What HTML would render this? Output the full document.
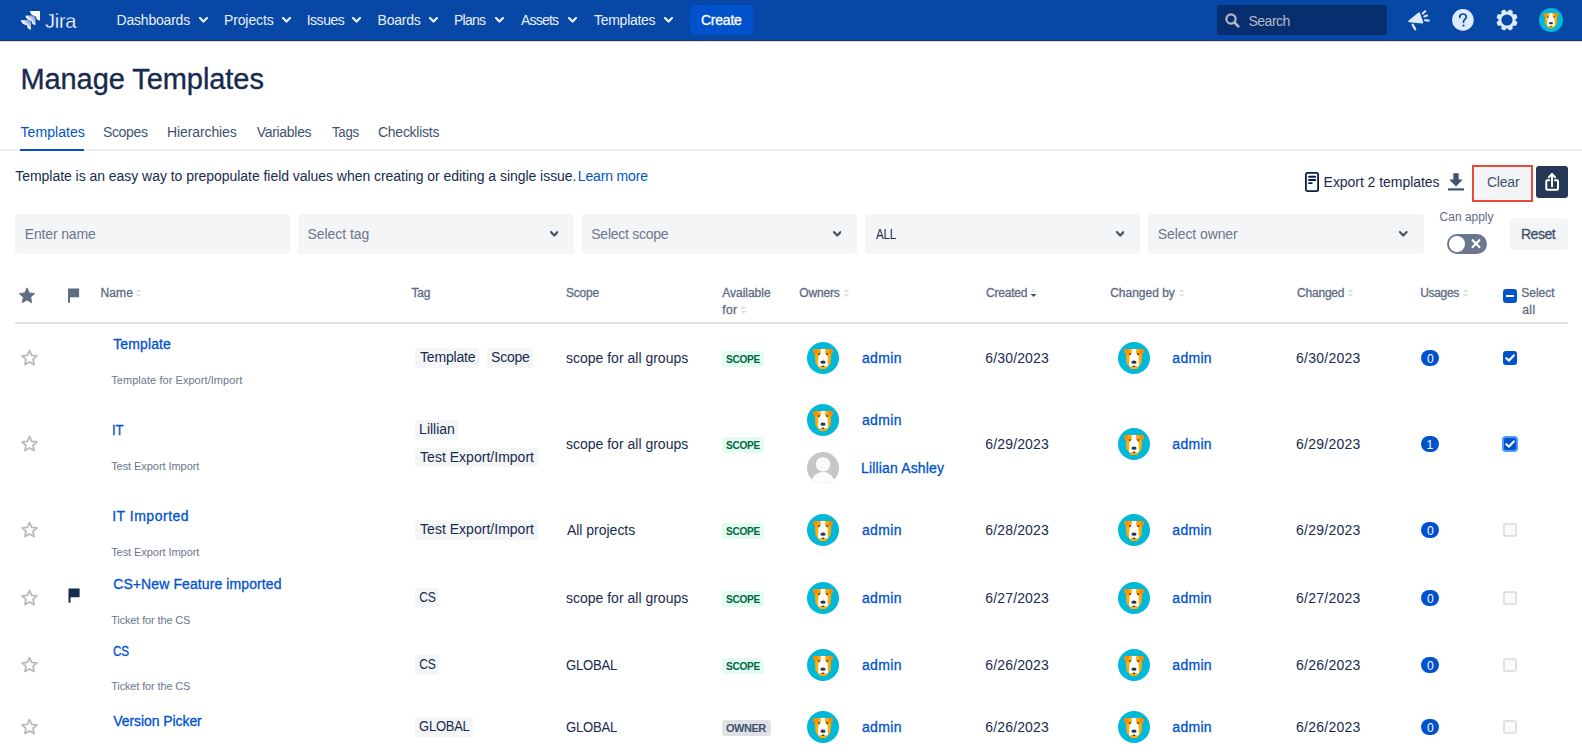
<!DOCTYPE html>
<html><head><meta charset="utf-8"><title>Manage Templates</title>
<style>
html,body{margin:0;padding:0;background:#fff;}
body{width:1582px;height:752px;position:relative;overflow:hidden;font-family:"Liberation Sans",sans-serif;}
.t{position:absolute;line-height:1;white-space:pre;}
</style></head><body>
<div style="position:absolute;left:0px;top:0px;width:1582px;height:40px;background:#0747A6;border-radius:0px;"></div><div style="position:absolute;left:0px;top:40px;width:1582px;height:1px;background:#1d3461;border-radius:0px;"></div><div style="position:absolute;left:0px;top:41px;width:1582px;height:1px;background:#dfe2e7;border-radius:0px;"></div><div style="position:absolute;left:690px;top:5px;width:63px;height:30px;background:#0052CC;border-radius:3px;"></div><div style="position:absolute;left:1217px;top:5px;width:170px;height:30px;background:#072f6f;border-radius:3px;"></div><svg style="position:absolute;left:198.6px;top:17px" width="9" height="6" viewBox="0 0 9 6"><path d="M1 1 L4.5 4.6 L8 1" fill="none" stroke="#E9F0FB" stroke-width="2.2" stroke-linecap="round" stroke-linejoin="round"/></svg><svg style="position:absolute;left:281.5px;top:17px" width="9" height="6" viewBox="0 0 9 6"><path d="M1 1 L4.5 4.6 L8 1" fill="none" stroke="#E9F0FB" stroke-width="2.2" stroke-linecap="round" stroke-linejoin="round"/></svg><svg style="position:absolute;left:352.3px;top:17px" width="9" height="6" viewBox="0 0 9 6"><path d="M1 1 L4.5 4.6 L8 1" fill="none" stroke="#E9F0FB" stroke-width="2.2" stroke-linecap="round" stroke-linejoin="round"/></svg><svg style="position:absolute;left:429px;top:17px" width="9" height="6" viewBox="0 0 9 6"><path d="M1 1 L4.5 4.6 L8 1" fill="none" stroke="#E9F0FB" stroke-width="2.2" stroke-linecap="round" stroke-linejoin="round"/></svg><svg style="position:absolute;left:495px;top:17px" width="9" height="6" viewBox="0 0 9 6"><path d="M1 1 L4.5 4.6 L8 1" fill="none" stroke="#E9F0FB" stroke-width="2.2" stroke-linecap="round" stroke-linejoin="round"/></svg><svg style="position:absolute;left:568px;top:17px" width="9" height="6" viewBox="0 0 9 6"><path d="M1 1 L4.5 4.6 L8 1" fill="none" stroke="#E9F0FB" stroke-width="2.2" stroke-linecap="round" stroke-linejoin="round"/></svg><svg style="position:absolute;left:664.4px;top:17px" width="9" height="6" viewBox="0 0 9 6"><path d="M1 1 L4.5 4.6 L8 1" fill="none" stroke="#E9F0FB" stroke-width="2.2" stroke-linecap="round" stroke-linejoin="round"/></svg><svg style="position:absolute;left:20px;top:10px" width="21" height="21" viewBox="0 0 21 21">
<defs><linearGradient id="jg1" x1="0.95" y1="0.05" x2="0.45" y2="0.55"><stop offset="0" stop-color="#fff" stop-opacity=".3"/><stop offset="1" stop-color="#fff"/></linearGradient></defs>
<path d="M10 1 H20 V10.6 C17.8 10.6 16 8.8 15.9 6.2 C13.2 6 10.2 4.2 10 1 Z" fill="#fff"/>
<path d="M5.5 5.5 H15.5 V15.1 C13.3 15.1 11.5 13.3 11.4 10.7 C8.7 10.5 5.7 8.7 5.5 5.5 Z" fill="url(#jg1)"/>
<path d="M1 10 H11 V19.6 C8.8 19.6 7 17.8 6.9 15.2 C4.2 15 1.2 13.2 1 10 Z" fill="url(#jg1)"/>
</svg><svg style="position:absolute;left:1225px;top:13px" width="15" height="15" viewBox="0 0 15 15"><circle cx="6" cy="6" r="4.6" fill="none" stroke="#B3BAC5" stroke-width="2.2"/><path d="M9.4 9.4 L13.3 13.3" stroke="#B3BAC5" stroke-width="2.6" stroke-linecap="round"/></svg><svg style="position:absolute;left:1406px;top:8px" width="26" height="24" viewBox="0 0 26 24"><path d="M3.2 13.3 L13.1 5.2 L16.4 14.5 Z" fill="#DEEBFF" stroke="#DEEBFF" stroke-width="1.8" stroke-linejoin="round"/><path d="M6.6 16.6 L9.3 21.4" stroke="#DEEBFF" stroke-width="2.2" stroke-linecap="round"/><path d="M16.8 5.5 L19.2 3.2 M18.4 8.4 L21 7.6 M19 12.2 L22.6 12.6" stroke="#DEEBFF" stroke-width="2.1" stroke-linecap="round"/></svg><svg style="position:absolute;left:1452px;top:9px" width="22" height="22" viewBox="0 0 22 22"><circle cx="10.9" cy="10.9" r="10.8" fill="#DEEBFF"/><path d="M7.7 8.3 C7.7 6.3 9.2 5 11 5 C12.9 5 14.3 6.3 14.3 8 C14.3 10.3 11.6 10.6 11.5 12.8 L11.5 13.3" fill="none" stroke="#0747A6" stroke-width="1.7" stroke-linecap="round"/><circle cx="11.5" cy="16.6" r="1.1" fill="#0747A6"/></svg><svg style="position:absolute;left:1496px;top:9px" width="22" height="22" viewBox="0 0 22 22"><circle cx="11" cy="11" r="8.6" fill="#DEEBFF"/><rect x="8.6" y="0.3" width="4.8" height="5" rx="1.6" transform="rotate(22.5 11 11)" fill="#DEEBFF"/><rect x="8.6" y="0.3" width="4.8" height="5" rx="1.6" transform="rotate(67.5 11 11)" fill="#DEEBFF"/><rect x="8.6" y="0.3" width="4.8" height="5" rx="1.6" transform="rotate(112.5 11 11)" fill="#DEEBFF"/><rect x="8.6" y="0.3" width="4.8" height="5" rx="1.6" transform="rotate(157.5 11 11)" fill="#DEEBFF"/><rect x="8.6" y="0.3" width="4.8" height="5" rx="1.6" transform="rotate(202.5 11 11)" fill="#DEEBFF"/><rect x="8.6" y="0.3" width="4.8" height="5" rx="1.6" transform="rotate(247.5 11 11)" fill="#DEEBFF"/><rect x="8.6" y="0.3" width="4.8" height="5" rx="1.6" transform="rotate(292.5 11 11)" fill="#DEEBFF"/><rect x="8.6" y="0.3" width="4.8" height="5" rx="1.6" transform="rotate(337.5 11 11)" fill="#DEEBFF"/><circle cx="11" cy="11" r="5.6" fill="#0747A6"/></svg><svg width="0" height="0" style="position:absolute"><defs><g id="dog">
<circle cx="16" cy="16" r="16" fill="#00B8D9"/>
<path d="M8.6 7.6 Q16 5.9 23.4 7.6 L24.1 14 L23.5 21.6 L20.2 25 L19.3 27.1 L12.7 27.1 L11.8 25 L8.5 21.6 L7.9 14 Z" fill="#FFAB00"/>
<ellipse cx="8.4" cy="9.5" rx="2.3" ry="2.8" transform="rotate(-25 8.4 9.5)" fill="#FF8B00"/>
<ellipse cx="23.6" cy="9.5" rx="2.3" ry="2.8" transform="rotate(25 23.6 9.5)" fill="#FF8B00"/>
<path d="M13.8 6.9 L18.2 6.9 L18.1 11.2 L20.7 14.6 L20.9 24.4 L11.1 24.4 L11.3 14.6 L13.9 11.2 Z" fill="#fff"/>
<circle cx="11.9" cy="12" r="1.1" fill="#42526E"/><circle cx="20.1" cy="12" r="1.1" fill="#42526E"/>
<ellipse cx="16" cy="20.2" rx="2.6" ry="1.6" fill="#253858"/>
<path d="M13.2 24.3 L18.8 24.3 L18.1 26.8 L13.9 26.8 Z" fill="#FFAB00"/>
<ellipse cx="16" cy="24.3" rx="1.3" ry=".7" fill="#253858"/>
</g>
<g id="star"><path d="M8.50 1.50 L10.67 6.31 L15.92 6.89 L12.02 10.44 L13.08 15.61 L8.50 13.00 L3.92 15.61 L4.98 10.44 L1.08 6.89 L6.33 6.31 Z" fill="none" stroke="#B9B9B9" stroke-width="1.75" stroke-linejoin="round"/></g>
</defs></svg><svg style="position:absolute;left:1539.0px;top:8.0px" width="24" height="24" viewBox="0 0 32 32"><use href="#dog"/></svg><div style="position:absolute;left:0px;top:149px;width:1582px;height:2px;background:#EBECF0;border-radius:0px;"></div><div style="position:absolute;left:20px;top:149px;width:64px;height:2px;background:#0052CC;border-radius:0px;"></div><svg style="position:absolute;left:1304px;top:171px" width="16" height="22" viewBox="0 0 16 22"><rect x="1.9" y="1.9" width="12.2" height="18.2" rx="1.6" fill="none" stroke="#0B1F45" stroke-width="1.8"/><path d="M5 5.8 H11.2 M5 9 H11.2 M5 12.1 H7.8" stroke="#0B1F45" stroke-width="1.9" stroke-linecap="round"/></svg><svg style="position:absolute;left:1447px;top:172px" width="18" height="20" viewBox="0 0 18 20"><path d="M6.3 1.3 H11.7 V7.4 H15.8 L9 14.6 L2.2 7.4 H6.3 Z" fill="#42526E"/><rect x="1" y="16.3" width="16" height="2.2" fill="#42526E"/></svg><div style="position:absolute;left:1473.5px;top:166.5px;width:58.0px;height:34.0px;background:#F4F5F7;border-radius:0px;border:2.8px solid #E8493B;box-sizing:border-box;width:60.8px;height:36.6px;left:1472.1px;top:165.1px;"></div><div style="position:absolute;left:1536px;top:166px;width:32px;height:32px;background:#253858;border-radius:3px;"></div><svg style="position:absolute;left:1543px;top:172px" width="18" height="20" viewBox="0 0 18 20"><path d="M9 2.2 V14.2" stroke="#fff" stroke-width="2" stroke-linecap="round"/><path d="M5.9 5.2 L9 2 L12.1 5.2" fill="none" stroke="#fff" stroke-width="2" stroke-linecap="round" stroke-linejoin="round"/><path d="M6.2 8.3 H4.3 Q3.3 8.3 3.3 9.3 V16.8 Q3.3 17.8 4.3 17.8 H14 Q15 17.8 15 16.8 V9.3 Q15 8.3 14 8.3 H11.9" fill="none" stroke="#fff" stroke-width="2" stroke-linecap="round" stroke-linejoin="round"/></svg><div style="position:absolute;left:15px;top:214px;width:275px;height:40px;background:#F4F5F7;border-radius:3px;"></div><div style="position:absolute;left:298px;top:214px;width:276px;height:40px;background:#F4F5F7;border-radius:3px;"></div><div style="position:absolute;left:582px;top:214px;width:275px;height:40px;background:#F4F5F7;border-radius:3px;"></div><div style="position:absolute;left:865px;top:214px;width:275px;height:40px;background:#F4F5F7;border-radius:3px;"></div><div style="position:absolute;left:1148px;top:214px;width:276px;height:40px;background:#F4F5F7;border-radius:3px;"></div><svg style="position:absolute;left:549.6px;top:231.3px" width="8.5" height="6" viewBox="0 0 9 6"><path d="M1 1 L4.5 4.6 L8 1" fill="none" stroke="#42526E" stroke-width="2.3" stroke-linecap="round" stroke-linejoin="round"/></svg><svg style="position:absolute;left:832.6px;top:231.3px" width="8.5" height="6" viewBox="0 0 9 6"><path d="M1 1 L4.5 4.6 L8 1" fill="none" stroke="#42526E" stroke-width="2.3" stroke-linecap="round" stroke-linejoin="round"/></svg><svg style="position:absolute;left:1115.6px;top:231.3px" width="8.5" height="6" viewBox="0 0 9 6"><path d="M1 1 L4.5 4.6 L8 1" fill="none" stroke="#42526E" stroke-width="2.3" stroke-linecap="round" stroke-linejoin="round"/></svg><svg style="position:absolute;left:1399.1px;top:231.3px" width="8.5" height="6" viewBox="0 0 9 6"><path d="M1 1 L4.5 4.6 L8 1" fill="none" stroke="#42526E" stroke-width="2.3" stroke-linecap="round" stroke-linejoin="round"/></svg><svg style="position:absolute;left:1447px;top:234px" width="40" height="20" viewBox="0 0 40 20"><rect x="0" y="0" width="40" height="20" rx="10" fill="#6B778C"/><circle cx="10" cy="10" r="8" fill="#fff"/><path d="M25.6 6.2 L32.4 13 M32.4 6.2 L25.6 13" stroke="#fff" stroke-width="2.2" stroke-linecap="round"/></svg><div style="position:absolute;left:1510px;top:218px;width:58px;height:32px;background:#F4F5F7;border-radius:3px;"></div><svg style="position:absolute;left:18px;top:287px" width="18" height="18" viewBox="0 0 18 18"><path d="M9 0.8 L11.3 5.9 L16.8 6.5 L12.7 10.2 L13.8 15.8 L9 13 L4.2 15.8 L5.3 10.2 L1.2 6.5 L6.7 5.9 Z" fill="#5E6C84" stroke="#5E6C84" stroke-width=".8" stroke-linejoin="round"/></svg><svg style="position:absolute;left:67px;top:288px" width="13" height="16" viewBox="0 0 13 16"><path d="M1 .6 H12.1 V9.2 H3 V14.8 H1 Z" fill="#5E6C84"/></svg><svg style="position:absolute;left:134.5px;top:288px" width="7" height="10" viewBox="0 0 7 10"><path d="M.5 3.8 L3.5 .8 L6.5 3.8 Z" fill="#DFE1E6"/><path d="M.5 6 L3.5 9 L6.5 6 Z" fill="#DFE1E6"/></svg><svg style="position:absolute;left:842.5px;top:288px" width="7" height="10" viewBox="0 0 7 10"><path d="M.5 3.8 L3.5 .8 L6.5 3.8 Z" fill="#DFE1E6"/><path d="M.5 6 L3.5 9 L6.5 6 Z" fill="#DFE1E6"/></svg><svg style="position:absolute;left:1177.5px;top:288px" width="7" height="10" viewBox="0 0 7 10"><path d="M.5 3.8 L3.5 .8 L6.5 3.8 Z" fill="#DFE1E6"/><path d="M.5 6 L3.5 9 L6.5 6 Z" fill="#DFE1E6"/></svg><svg style="position:absolute;left:1346.5px;top:288px" width="7" height="10" viewBox="0 0 7 10"><path d="M.5 3.8 L3.5 .8 L6.5 3.8 Z" fill="#DFE1E6"/><path d="M.5 6 L3.5 9 L6.5 6 Z" fill="#DFE1E6"/></svg><svg style="position:absolute;left:1461.5px;top:288px" width="7" height="10" viewBox="0 0 7 10"><path d="M.5 3.8 L3.5 .8 L6.5 3.8 Z" fill="#DFE1E6"/><path d="M.5 6 L3.5 9 L6.5 6 Z" fill="#DFE1E6"/></svg><svg style="position:absolute;left:1029.6px;top:288px" width="7" height="10" viewBox="0 0 7 10"><path d="M.5 3.8 L3.5 .8 L6.5 3.8 Z" fill="#DFE1E6"/><path d="M.5 6 L3.5 9 L6.5 6 Z" fill="#42526E"/></svg><svg style="position:absolute;left:739.5px;top:305px" width="7" height="10" viewBox="0 0 7 10"><path d="M.5 3.8 L3.5 .8 L6.5 3.8 Z" fill="#DFE1E6"/><path d="M.5 6 L3.5 9 L6.5 6 Z" fill="#DFE1E6"/></svg><div style="position:absolute;left:1503px;top:289px;width:14px;height:14px;background:#0052CC;border-radius:3px;"></div><div style="position:absolute;left:1506px;top:295px;width:8px;height:2.1999999999999886px;background:#fff;border-radius:0px;"></div><div style="position:absolute;left:15px;top:322px;width:1553px;height:2px;background:#DFE1E6;border-radius:0px;"></div><svg style="position:absolute;left:21.4px;top:349.2px" width="17" height="17" viewBox="0 0 17 17"><use href="#star"/></svg><div style="position:absolute;left:415.1px;top:348.3px;width:63.5px;height:19.399999999999977px;background:#F4F5F7;border-radius:3px;"></div><div style="position:absolute;left:487.2px;top:348.3px;width:45.599999999999966px;height:19.399999999999977px;background:#F4F5F7;border-radius:3px;"></div><div style="position:absolute;left:722.1px;top:351px;width:42.0px;height:16px;background:#E3FCEF;border-radius:3px;"></div><svg style="position:absolute;left:807.0px;top:342.0px" width="32" height="32" viewBox="0 0 32 32"><use href="#dog"/></svg><svg style="position:absolute;left:1118.0px;top:342.0px" width="32" height="32" viewBox="0 0 32 32"><use href="#dog"/></svg><div style="position:absolute;left:1421px;top:350px;width:18px;height:16px;background:#0052CC;border-radius:8px;"></div><div style="position:absolute;left:1503.2px;top:351px;width:13.799999999999955px;height:13.899999999999977px;background:#0052CC;border-radius:3px;"></div><svg style="position:absolute;left:1503.2px;top:351px" width="14" height="14" viewBox="0 0 14 14"><path d="M3.3 7.2 L6 9.6 L10.8 4.4" fill="none" stroke="#fff" stroke-width="2.2" stroke-linecap="round" stroke-linejoin="round"/></svg><svg style="position:absolute;left:21.4px;top:435.2px" width="17" height="17" viewBox="0 0 17 17"><use href="#star"/></svg><div style="position:absolute;left:415.2px;top:420.3px;width:42.60000000000002px;height:19.399999999999977px;background:#F4F5F7;border-radius:3px;"></div><div style="position:absolute;left:415.2px;top:448.0px;width:122.69999999999999px;height:19.399999999999977px;background:#F4F5F7;border-radius:3px;"></div><div style="position:absolute;left:722.1px;top:437px;width:42.0px;height:16px;background:#E3FCEF;border-radius:3px;"></div><svg style="position:absolute;left:807.0px;top:404.0px" width="32" height="32" viewBox="0 0 32 32"><use href="#dog"/></svg><svg style="position:absolute;left:1118.0px;top:428.0px" width="32" height="32" viewBox="0 0 32 32"><use href="#dog"/></svg><div style="position:absolute;left:1421px;top:436px;width:18px;height:16px;background:#0052CC;border-radius:8px;"></div><div style="position:absolute;left:1502.2px;top:436px;width:15.799999999999955px;height:15.800000000000011px;background:#4C9AFF;border-radius:4px;"></div><div style="position:absolute;left:1504px;top:437.8px;width:12.200000000000045px;height:12.199999999999989px;background:#0052CC;border-radius:2px;"></div><svg style="position:absolute;left:1503.2px;top:437px" width="14" height="14" viewBox="0 0 14 14"><path d="M3.3 7.2 L6 9.6 L10.8 4.4" fill="none" stroke="#fff" stroke-width="2.2" stroke-linecap="round" stroke-linejoin="round"/></svg><svg style="position:absolute;left:21.4px;top:521.2px" width="17" height="17" viewBox="0 0 17 17"><use href="#star"/></svg><div style="position:absolute;left:415.2px;top:520.3px;width:122.69999999999999px;height:19.40000000000009px;background:#F4F5F7;border-radius:3px;"></div><div style="position:absolute;left:722.1px;top:523px;width:42.0px;height:16px;background:#E3FCEF;border-radius:3px;"></div><svg style="position:absolute;left:807.0px;top:514.0px" width="32" height="32" viewBox="0 0 32 32"><use href="#dog"/></svg><svg style="position:absolute;left:1118.0px;top:514.0px" width="32" height="32" viewBox="0 0 32 32"><use href="#dog"/></svg><div style="position:absolute;left:1421px;top:522px;width:18px;height:16px;background:#0052CC;border-radius:8px;"></div><div style="position:absolute;left:1503.2px;top:523px;width:13.799999999999955px;height:13.899999999999977px;background:#FAFBFC;border-radius:3px;border:2px solid #DFE1E6;box-sizing:border-box;"></div><svg style="position:absolute;left:21.4px;top:589.2px" width="17" height="17" viewBox="0 0 17 17"><use href="#star"/></svg><svg style="position:absolute;left:66.5px;top:588px" width="14" height="16" viewBox="0 0 13 16"><path d="M1 .6 H12.1 V9.2 H3 V14.8 H1 Z" fill="#172B4D"/></svg><div style="position:absolute;left:415.1px;top:588.3px;width:23.69999999999999px;height:19.40000000000009px;background:#F4F5F7;border-radius:3px;"></div><div style="position:absolute;left:722.1px;top:591px;width:42.0px;height:16px;background:#E3FCEF;border-radius:3px;"></div><svg style="position:absolute;left:807.0px;top:582.0px" width="32" height="32" viewBox="0 0 32 32"><use href="#dog"/></svg><svg style="position:absolute;left:1118.0px;top:582.0px" width="32" height="32" viewBox="0 0 32 32"><use href="#dog"/></svg><div style="position:absolute;left:1421px;top:590px;width:18px;height:16px;background:#0052CC;border-radius:8px;"></div><div style="position:absolute;left:1503.2px;top:591px;width:13.799999999999955px;height:13.899999999999977px;background:#FAFBFC;border-radius:3px;border:2px solid #DFE1E6;box-sizing:border-box;"></div><svg style="position:absolute;left:21.4px;top:656.2px" width="17" height="17" viewBox="0 0 17 17"><use href="#star"/></svg><div style="position:absolute;left:415.1px;top:655.3px;width:23.69999999999999px;height:19.40000000000009px;background:#F4F5F7;border-radius:3px;"></div><div style="position:absolute;left:722.1px;top:658px;width:42.0px;height:16px;background:#E3FCEF;border-radius:3px;"></div><svg style="position:absolute;left:807.0px;top:649.0px" width="32" height="32" viewBox="0 0 32 32"><use href="#dog"/></svg><svg style="position:absolute;left:1118.0px;top:649.0px" width="32" height="32" viewBox="0 0 32 32"><use href="#dog"/></svg><div style="position:absolute;left:1421px;top:657px;width:18px;height:16px;background:#0052CC;border-radius:8px;"></div><div style="position:absolute;left:1503.2px;top:658px;width:13.799999999999955px;height:13.899999999999977px;background:#FAFBFC;border-radius:3px;border:2px solid #DFE1E6;box-sizing:border-box;"></div><svg style="position:absolute;left:21.4px;top:718.2px" width="17" height="17" viewBox="0 0 17 17"><use href="#star"/></svg><div style="position:absolute;left:415.1px;top:717.3px;width:57.799999999999955px;height:19.40000000000009px;background:#F4F5F7;border-radius:3px;"></div><div style="position:absolute;left:722.1px;top:720px;width:48.60000000000002px;height:16px;background:#DFE1E6;border-radius:3px;"></div><svg style="position:absolute;left:807.0px;top:711.0px" width="32" height="32" viewBox="0 0 32 32"><use href="#dog"/></svg><svg style="position:absolute;left:1118.0px;top:711.0px" width="32" height="32" viewBox="0 0 32 32"><use href="#dog"/></svg><div style="position:absolute;left:1421px;top:719px;width:18px;height:16px;background:#0052CC;border-radius:8px;"></div><div style="position:absolute;left:1503.2px;top:720px;width:13.799999999999955px;height:13.899999999999977px;background:#FAFBFC;border-radius:3px;border:2px solid #DFE1E6;box-sizing:border-box;"></div><svg style="position:absolute;left:807px;top:452px" width="32" height="32" viewBox="0 0 32 32"><defs><clipPath id="cc"><circle cx="16" cy="16" r="16"/></clipPath></defs><circle cx="16" cy="16" r="16" fill="#C6C6C6"/><g clip-path="url(#cc)"><circle cx="16" cy="12.4" r="7.2" fill="#FAFAFA"/><circle cx="16" cy="31.5" r="11.6" fill="#FCFCFC"/></g></svg>
<div class="t" style="left:116.60px;top:13.20px;font-size:14px;color:#E9F0FB;letter-spacing:-0.21px;">Dashboards</div><div class="t" style="left:223.90px;top:13.20px;font-size:14px;color:#E9F0FB;letter-spacing:-0.101px;">Projects</div><div class="t" style="left:306.70px;top:13.20px;font-size:14px;color:#E9F0FB;letter-spacing:-0.48px;">Issues</div><div class="t" style="left:377.50px;top:13.20px;font-size:14px;color:#E9F0FB;letter-spacing:-0.2px;">Boards</div><div class="t" style="left:454.00px;top:13.20px;font-size:14px;color:#E9F0FB;letter-spacing:-0.75px;">Plans</div><div class="t" style="left:521.00px;top:13.20px;font-size:14px;color:#E9F0FB;letter-spacing:-0.8px;">Assets</div><div class="t" style="left:594.00px;top:13.20px;font-size:14px;color:#E9F0FB;letter-spacing:-0.275px;">Templates</div><div class="t" style="left:701.00px;top:13.20px;font-size:14px;color:#FFFFFF;-webkit-text-stroke:0.3px #FFFFFF;letter-spacing:-0.24px;">Create</div><div class="t" style="left:1248.50px;top:14.00px;font-size:14px;color:#B3BAC5;letter-spacing:-0.5px;">Search</div><div class="t" style="left:44.80px;top:9.90px;font-size:21px;color:#FFFFFF;letter-spacing:-0.3px;transform:scaleX(0.954);transform-origin:0px 0;-webkit-text-stroke:0.3px #0747A6;">Jira</div><div class="t" style="left:20.40px;top:65.00px;font-size:29px;color:#172B4D;letter-spacing:-0.067px;-webkit-text-stroke:0.35px #172B4D;">Manage Templates</div><div class="t" style="left:20.50px;top:125.00px;font-size:14px;color:#0052CC;letter-spacing:0.062px;">Templates</div><div class="t" style="left:103.00px;top:125.00px;font-size:14px;color:#42526E;letter-spacing:-0.36px;">Scopes</div><div class="t" style="left:167.00px;top:125.00px;font-size:14px;color:#42526E;letter-spacing:-0.1px;">Hierarchies</div><div class="t" style="left:256.70px;top:125.00px;font-size:14px;color:#42526E;letter-spacing:-0.3px;">Variables</div><div class="t" style="left:331.80px;top:125.00px;font-size:14px;color:#42526E;letter-spacing:-0.3px;transform:scaleX(0.946);transform-origin:0px 0;">Tags</div><div class="t" style="left:378.00px;top:125.00px;font-size:14px;color:#42526E;letter-spacing:-0.267px;">Checklists</div><div class="t" style="left:15.30px;top:169.00px;font-size:14px;color:#172B4D;letter-spacing:-0.042px;">Template is an easy way to prepopulate field values when creating or editing a single issue.</div><div class="t" style="left:577.80px;top:169.00px;font-size:14px;color:#0052CC;letter-spacing:-0.156px;">Learn more</div><div class="t" style="left:1323.60px;top:175.00px;font-size:14px;color:#172B4D;letter-spacing:-0.046px;">Export 2 templates</div><div class="t" style="left:1486.90px;top:175.00px;font-size:14px;color:#42526E;letter-spacing:-0.175px;">Clear</div><div class="t" style="left:24.80px;top:227.20px;font-size:14px;color:#6B778C;letter-spacing:-0.156px;">Enter name</div><div class="t" style="left:307.40px;top:227.20px;font-size:14px;color:#6B778C;letter-spacing:-0.045px;">Select tag</div><div class="t" style="left:591.30px;top:227.20px;font-size:14px;color:#6B778C;letter-spacing:-0.263px;">Select scope</div><div class="t" style="left:875.70px;top:227.20px;font-size:14px;color:#172B4D;letter-spacing:-0.3px;transform:scaleX(0.829);transform-origin:0px 0;">ALL</div><div class="t" style="left:1157.70px;top:227.20px;font-size:14px;color:#6B778C;letter-spacing:-0.081px;">Select owner</div><div class="t" style="left:1439.60px;top:211.00px;font-size:12px;color:#5E6C84;letter-spacing:-0.014px;">Can apply</div><div class="t" style="left:1521.00px;top:227.40px;font-size:14px;color:#42526E;-webkit-text-stroke:0.3px #42526E;letter-spacing:-0.5px;">Reset</div><div class="t" style="left:100.60px;top:287.00px;font-size:12px;color:#5E6C84;-webkit-text-stroke:0.3px #5E6C84;letter-spacing:0.066px;">Name</div><div class="t" style="left:411.40px;top:287.00px;font-size:12px;color:#5E6C84;-webkit-text-stroke:0.3px #5E6C84;letter-spacing:-0.2px;">Tag</div><div class="t" style="left:565.90px;top:287.00px;font-size:12px;color:#5E6C84;-webkit-text-stroke:0.3px #5E6C84;letter-spacing:-0.175px;">Scope</div><div class="t" style="left:722.30px;top:287.00px;font-size:12px;color:#5E6C84;-webkit-text-stroke:0.3px #5E6C84;letter-spacing:-0.025px;">Available</div><div class="t" style="left:799.30px;top:287.00px;font-size:12px;color:#5E6C84;-webkit-text-stroke:0.3px #5E6C84;letter-spacing:-0.18px;">Owners</div><div class="t" style="left:986.00px;top:287.00px;font-size:12px;color:#5E6C84;-webkit-text-stroke:0.3px #5E6C84;letter-spacing:-0.201px;">Created</div><div class="t" style="left:1110.20px;top:287.00px;font-size:12px;color:#5E6C84;-webkit-text-stroke:0.3px #5E6C84;letter-spacing:-0.012px;">Changed by</div><div class="t" style="left:1297.00px;top:287.00px;font-size:12px;color:#5E6C84;-webkit-text-stroke:0.3px #5E6C84;letter-spacing:-0.201px;">Changed</div><div class="t" style="left:1420.30px;top:287.00px;font-size:12px;color:#5E6C84;-webkit-text-stroke:0.3px #5E6C84;letter-spacing:-0.34px;">Usages</div><div class="t" style="left:1521.30px;top:287.00px;font-size:12px;color:#5E6C84;-webkit-text-stroke:0.3px #5E6C84;letter-spacing:-0.02px;">Select</div><div class="t" style="left:722.30px;top:303.60px;font-size:12px;color:#5E6C84;-webkit-text-stroke:0.3px #5E6C84;letter-spacing:0.3px;">for</div><div class="t" style="left:1522.30px;top:303.60px;font-size:12px;color:#5E6C84;-webkit-text-stroke:0.3px #5E6C84;letter-spacing:0.4px;">all</div><div class="t" style="left:113.20px;top:337.00px;font-size:14px;color:#0052CC;-webkit-text-stroke:0.3px #0052CC;letter-spacing:0.129px;">Template</div><div class="t" style="left:111.20px;top:374.80px;font-size:11px;color:#6B778C;letter-spacing:0.056px;">Template for Export/Import</div><div class="t" style="left:420.00px;top:350.00px;font-size:14px;color:#172B4D;letter-spacing:-0.185px;">Template</div><div class="t" style="left:491.10px;top:350.00px;font-size:14px;color:#172B4D;letter-spacing:-0.25px;">Scope</div><div class="t" style="left:565.90px;top:351.00px;font-size:14px;color:#172B4D;letter-spacing:0.01px;">scope for all groups</div><div class="t" style="left:725.90px;top:354.00px;font-size:11px;color:#006644;font-weight:700;letter-spacing:-0.3px;transform:scaleX(0.918);transform-origin:0px 0;">SCOPE</div><div class="t" style="left:862.00px;top:351.00px;font-size:14px;color:#0052CC;-webkit-text-stroke:0.3px #0052CC;letter-spacing:0.325px;">admin</div><div class="t" style="left:985.30px;top:351.00px;font-size:14px;color:#172B4D;letter-spacing:0.15px;">6/30/2023</div><div class="t" style="left:1172.30px;top:351.00px;font-size:14px;color:#0052CC;-webkit-text-stroke:0.3px #0052CC;letter-spacing:0.3px;">admin</div><div class="t" style="left:1296.00px;top:351.00px;font-size:14px;color:#172B4D;letter-spacing:0.25px;">6/30/2023</div><div class="t" style="left:1427.10px;top:352.80px;font-size:12px;color:#FFFFFF;">0</div><div class="t" style="left:112.20px;top:423.30px;font-size:14px;color:#0052CC;-webkit-text-stroke:0.3px #0052CC;letter-spacing:-0.3px;transform:scaleX(0.940);transform-origin:1px 0;">IT</div><div class="t" style="left:111.20px;top:461.00px;font-size:11px;color:#6B778C;letter-spacing:-0.064px;">Test Export Import</div><div class="t" style="left:419.10px;top:422.00px;font-size:14px;color:#172B4D;">Lillian</div><div class="t" style="left:420.10px;top:449.70px;font-size:14px;color:#172B4D;letter-spacing:0.018px;">Test Export/Import</div><div class="t" style="left:565.90px;top:437.00px;font-size:14px;color:#172B4D;letter-spacing:0.01px;">scope for all groups</div><div class="t" style="left:725.90px;top:440.00px;font-size:11px;color:#006644;font-weight:700;letter-spacing:-0.3px;transform:scaleX(0.918);transform-origin:0px 0;">SCOPE</div><div class="t" style="left:862.00px;top:413.00px;font-size:14px;color:#0052CC;-webkit-text-stroke:0.3px #0052CC;letter-spacing:0.325px;">admin</div><div class="t" style="left:861.00px;top:461.00px;font-size:14px;color:#0052CC;-webkit-text-stroke:0.3px #0052CC;letter-spacing:0.162px;">Lillian Ashley</div><div class="t" style="left:985.30px;top:437.00px;font-size:14px;color:#172B4D;letter-spacing:0.15px;">6/29/2023</div><div class="t" style="left:1172.30px;top:437.00px;font-size:14px;color:#0052CC;-webkit-text-stroke:0.3px #0052CC;letter-spacing:0.3px;">admin</div><div class="t" style="left:1296.00px;top:437.00px;font-size:14px;color:#172B4D;letter-spacing:0.25px;">6/29/2023</div><div class="t" style="left:1426.60px;top:438.80px;font-size:12px;color:#FFFFFF;">1</div><div class="t" style="left:112.20px;top:509.30px;font-size:14px;color:#0052CC;-webkit-text-stroke:0.3px #0052CC;letter-spacing:0.51px;">IT Imported</div><div class="t" style="left:111.20px;top:546.50px;font-size:11px;color:#6B778C;letter-spacing:-0.064px;">Test Export Import</div><div class="t" style="left:420.10px;top:522.00px;font-size:14px;color:#172B4D;letter-spacing:0.018px;">Test Export/Import</div><div class="t" style="left:566.90px;top:523.00px;font-size:14px;color:#172B4D;letter-spacing:-0.01px;">All projects</div><div class="t" style="left:725.90px;top:526.00px;font-size:11px;color:#006644;font-weight:700;letter-spacing:-0.3px;transform:scaleX(0.918);transform-origin:0px 0;">SCOPE</div><div class="t" style="left:862.00px;top:523.00px;font-size:14px;color:#0052CC;-webkit-text-stroke:0.3px #0052CC;letter-spacing:0.325px;">admin</div><div class="t" style="left:985.30px;top:523.00px;font-size:14px;color:#172B4D;letter-spacing:0.15px;">6/28/2023</div><div class="t" style="left:1172.30px;top:523.00px;font-size:14px;color:#0052CC;-webkit-text-stroke:0.3px #0052CC;letter-spacing:0.3px;">admin</div><div class="t" style="left:1296.00px;top:523.00px;font-size:14px;color:#172B4D;letter-spacing:0.25px;">6/29/2023</div><div class="t" style="left:1427.10px;top:524.80px;font-size:12px;color:#FFFFFF;">0</div><div class="t" style="left:113.20px;top:576.80px;font-size:14px;color:#0052CC;-webkit-text-stroke:0.3px #0052CC;letter-spacing:0.1px;">CS+New Feature imported</div><div class="t" style="left:111.20px;top:614.80px;font-size:11px;color:#6B778C;letter-spacing:-0.143px;">Ticket for the CS</div><div class="t" style="left:419.00px;top:590.00px;font-size:14px;color:#172B4D;letter-spacing:-0.3px;transform:scaleX(0.868);transform-origin:1px 0;">CS</div><div class="t" style="left:565.90px;top:591.00px;font-size:14px;color:#172B4D;letter-spacing:0.01px;">scope for all groups</div><div class="t" style="left:725.90px;top:594.00px;font-size:11px;color:#006644;font-weight:700;letter-spacing:-0.3px;transform:scaleX(0.918);transform-origin:0px 0;">SCOPE</div><div class="t" style="left:862.00px;top:591.00px;font-size:14px;color:#0052CC;-webkit-text-stroke:0.3px #0052CC;letter-spacing:0.325px;">admin</div><div class="t" style="left:985.30px;top:591.00px;font-size:14px;color:#172B4D;letter-spacing:0.15px;">6/27/2023</div><div class="t" style="left:1172.30px;top:591.00px;font-size:14px;color:#0052CC;-webkit-text-stroke:0.3px #0052CC;letter-spacing:0.3px;">admin</div><div class="t" style="left:1296.00px;top:591.00px;font-size:14px;color:#172B4D;letter-spacing:0.25px;">6/27/2023</div><div class="t" style="left:1427.10px;top:592.80px;font-size:12px;color:#FFFFFF;">0</div><div class="t" style="left:113.20px;top:643.80px;font-size:14px;color:#0052CC;-webkit-text-stroke:0.3px #0052CC;letter-spacing:-0.3px;transform:scaleX(0.837);transform-origin:0px 0;">CS</div><div class="t" style="left:111.20px;top:681.40px;font-size:11px;color:#6B778C;letter-spacing:-0.143px;">Ticket for the CS</div><div class="t" style="left:419.00px;top:657.00px;font-size:14px;color:#172B4D;letter-spacing:-0.3px;transform:scaleX(0.868);transform-origin:1px 0;">CS</div><div class="t" style="left:565.90px;top:658.00px;font-size:14px;color:#172B4D;letter-spacing:-0.3px;transform:scaleX(0.938);transform-origin:1px 0;">GLOBAL</div><div class="t" style="left:725.90px;top:661.00px;font-size:11px;color:#006644;font-weight:700;letter-spacing:-0.3px;transform:scaleX(0.918);transform-origin:0px 0;">SCOPE</div><div class="t" style="left:862.00px;top:658.00px;font-size:14px;color:#0052CC;-webkit-text-stroke:0.3px #0052CC;letter-spacing:0.325px;">admin</div><div class="t" style="left:985.30px;top:658.00px;font-size:14px;color:#172B4D;letter-spacing:0.15px;">6/26/2023</div><div class="t" style="left:1172.30px;top:658.00px;font-size:14px;color:#0052CC;-webkit-text-stroke:0.3px #0052CC;letter-spacing:0.3px;">admin</div><div class="t" style="left:1296.00px;top:658.00px;font-size:14px;color:#172B4D;letter-spacing:0.25px;">6/26/2023</div><div class="t" style="left:1427.10px;top:659.80px;font-size:12px;color:#FFFFFF;">0</div><div class="t" style="left:113.20px;top:714.00px;font-size:14px;color:#0052CC;-webkit-text-stroke:0.3px #0052CC;letter-spacing:-0.069px;">Version Picker</div><div class="t" style="left:419.00px;top:719.00px;font-size:14px;color:#172B4D;letter-spacing:-0.3px;transform:scaleX(0.930);transform-origin:1px 0;">GLOBAL</div><div class="t" style="left:565.90px;top:720.00px;font-size:14px;color:#172B4D;letter-spacing:-0.3px;transform:scaleX(0.938);transform-origin:1px 0;">GLOBAL</div><div class="t" style="left:726.00px;top:723.00px;font-size:11px;color:#42526E;font-weight:700;letter-spacing:-0.5px;">OWNER</div><div class="t" style="left:862.00px;top:720.00px;font-size:14px;color:#0052CC;-webkit-text-stroke:0.3px #0052CC;letter-spacing:0.325px;">admin</div><div class="t" style="left:985.30px;top:720.00px;font-size:14px;color:#172B4D;letter-spacing:0.15px;">6/26/2023</div><div class="t" style="left:1172.30px;top:720.00px;font-size:14px;color:#0052CC;-webkit-text-stroke:0.3px #0052CC;letter-spacing:0.3px;">admin</div><div class="t" style="left:1296.00px;top:720.00px;font-size:14px;color:#172B4D;letter-spacing:0.25px;">6/26/2023</div><div class="t" style="left:1427.10px;top:721.80px;font-size:12px;color:#FFFFFF;">0</div>
</body></html>
